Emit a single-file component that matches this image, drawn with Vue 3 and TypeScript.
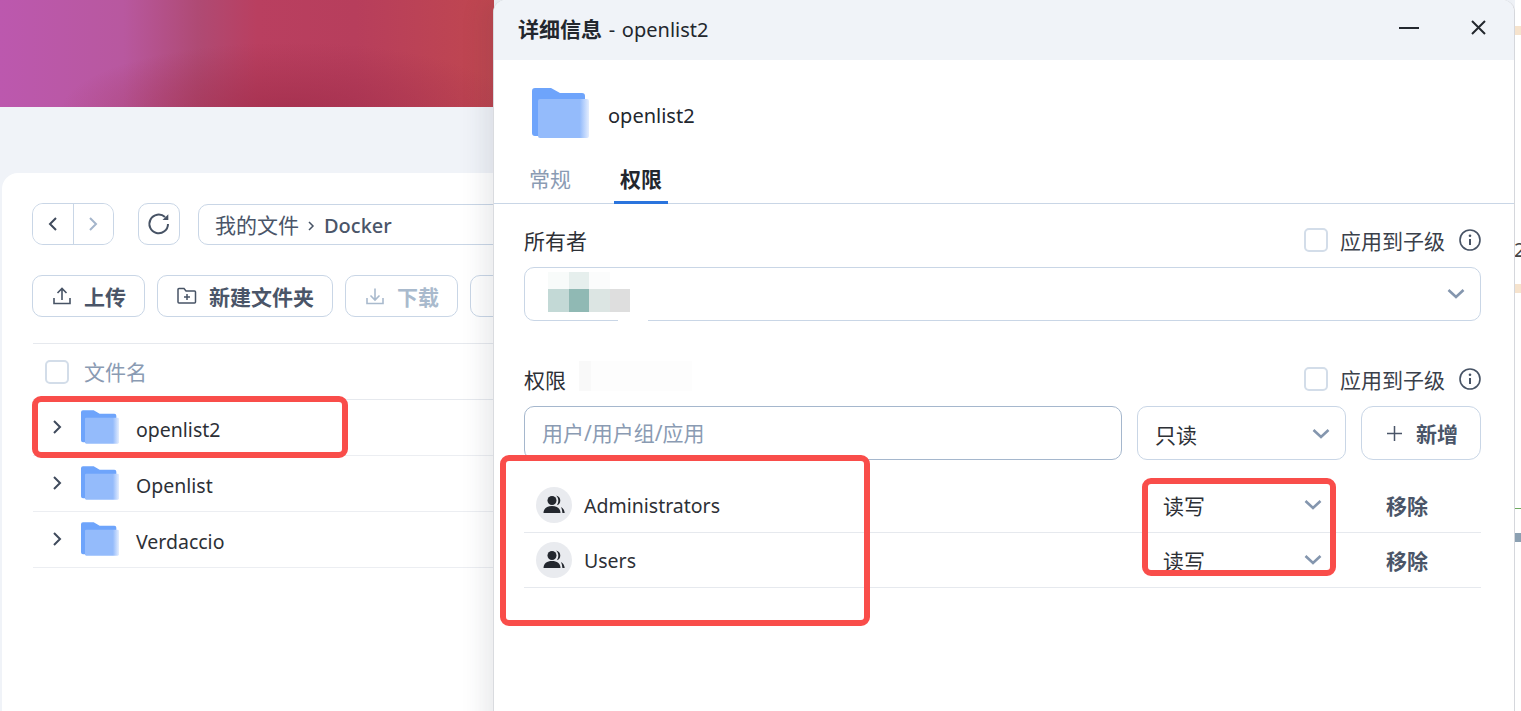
<script setup lang="ts">
const files = ['openlist2', 'Openlist', 'Verdaccio']

interface Grant {
  name: string
  access: string
}

const grants: Grant[] = [
  { name: 'Administrators', access: '读写' },
  { name: 'Users', access: '读写' },
]
</script>

<template>
  <div class="page">
    <!-- file manager behind the dialog -->
    <section class="manager">
      <div class="hero"></div>
      <div class="card">
        <div class="nav-row">
          <div class="nav-group">
            <button class="nav-btn">
              <svg width="12" height="16" viewBox="0 0 12 16" fill="none"><path d="M9 2 3 8l6 6" stroke="#3f4a5c" stroke-width="2"/></svg>
            </button>
            <button class="nav-btn">
              <svg width="12" height="16" viewBox="0 0 12 16" fill="none"><path d="m3 2 6 6-6 6" stroke="#a4b5cb" stroke-width="2"/></svg>
            </button>
          </div>
          <button class="refresh">
            <svg width="24" height="24" viewBox="0 0 24 24" fill="none">
              <path d="M21 12a9.300 9.300 0 1 1-3-6.900" stroke="#475365" stroke-width="2"/>
              <path d="M21.300 2.200v5.800h-5.800z" fill="#475365"/>
            </svg>
          </button>
          <div class="crumbs">
            <span class="cjk">我的文件</span>
            <svg width="9" height="12" viewBox="0 0 9 12" fill="none"><path d="m2 2 4 4-4 4" stroke="#475365" stroke-width="1.5"/></svg>
            <span class="crumb-current">Docker</span>
          </div>
        </div>

        <div class="tool-row">
          <button class="tool">
            <svg width="20" height="20" viewBox="0 0 20 20" fill="none">
              <path d="M2 12v5.500h16V12M10 14V2.500M5.500 7 10 2.500 14.500 7" stroke="#475365" stroke-width="1.600"/>
            </svg>
            上传
          </button>
          <button class="tool">
            <svg width="20" height="20" viewBox="0 0 20 20" fill="none">
              <path d="M1 3.500a1 1 0 0 1 1-1h5l2 2.500h8.500a1 1 0 0 1 1 1v10a1 1 0 0 1-1 1H2a1 1 0 0 1-1-1zM10 8v6M7 11h6" stroke="#475365" stroke-width="1.500"/>
            </svg>
            新建文件夹
          </button>
          <button class="tool off">
            <svg width="20" height="20" viewBox="0 0 20 20" fill="none">
              <path d="M2 12v5.500h16V12M10 2.500V14M5.500 9.500 10 14l4.500-4.500" stroke="#a9bacd" stroke-width="1.600"/>
            </svg>
            下载
          </button>
          <button class="tool off">
            <svg width="20" height="20" viewBox="0 0 20 20" fill="none">
              <path d="M3 5h14M6 5l1 12h6l1-12M8 5V3h4v2" stroke="#a9bacd" stroke-width="1.600"/>
            </svg>
          </button>
        </div>

        <div class="table">
          <div class="table-head">
            <span class="check"></span>
            <span class="cjk head-label">文件名</span>
          </div>
          <div v-for="file in files" :key="file" class="file-row">
            <svg class="expand" width="12" height="16" viewBox="0 0 12 16" fill="none"><path d="m3 2 6 6-6 6" stroke="#3f4a5c" stroke-width="2"/></svg>
            <svg class="file-icon" width="38" height="34" viewBox="0 0 57 50">
              <defs>
                <linearGradient :id="`fade-${file}`" x1="0" x2="1" y1="0" y2="0">
                  <stop offset="0.82" stop-color="#94bbfb"/>
                  <stop offset="1" stop-color="#e4edfe"/>
                </linearGradient>
              </defs>
              <path d="M0 3a3 3 0 0 1 3-3h16l9 5h22a3 3 0 0 1 3 3v40H3a3 3 0 0 1-3-3z" fill="#6ea4fb"/>
              <rect x="6" y="11" width="51" height="39" rx="2" :fill="`url(#fade-${file})`"/>
            </svg>
            <span class="file-name">{{ file }}</span>
          </div>
        </div>
      </div>
    </section>

    <!-- details dialog -->
    <section class="dialog">
      <header class="dialog-head">
        <span class="dialog-title"><b>详细信息</b> - openlist2</span>
        <div class="dialog-actions">
          <svg width="20" height="20" viewBox="0 0 20 20"><path d="M0 10h20" stroke="#23272e" stroke-width="2"/></svg>
          <svg width="15" height="15" viewBox="0 0 15 15"><path d="m1 1 13 13M14 1 1 14" stroke="#23272e" stroke-width="2"/></svg>
        </div>
      </header>

      <div class="dialog-file">
        <svg width="57" height="50" viewBox="0 0 57 50">
          <defs>
            <linearGradient id="fade-big" x1="0" x2="1" y1="0" y2="0">
              <stop offset="0.82" stop-color="#94bbfb"/>
              <stop offset="1" stop-color="#e4edfe"/>
            </linearGradient>
          </defs>
          <path d="M0 3a3 3 0 0 1 3-3h16l9 5h22a3 3 0 0 1 3 3v40H3a3 3 0 0 1-3-3z" fill="#6ea4fb"/>
          <rect x="6" y="11" width="51" height="39" rx="2" fill="url(#fade-big)"/>
        </svg>
        <span class="dialog-name">openlist2</span>
      </div>

      <nav class="tabs">
        <span class="tab">常规</span>
        <span class="tab active">权限</span>
      </nav>

      <div class="dialog-body">
        <div class="label-row">
          <span class="cjk">所有者</span>
          <div class="apply">
            <span class="check"></span>
            <span class="cjk">应用到子级</span>
            <svg width="22" height="22" viewBox="0 0 22 22" fill="none">
              <circle cx="11" cy="11" r="10" stroke="#475365" stroke-width="1.600"/>
              <path d="M11 10v6" stroke="#475365" stroke-width="2"/>
              <circle cx="11" cy="6.700" r="1.300" fill="#475365"/>
            </svg>
          </div>
        </div>
        <div class="owner">
          <div class="mosaic">
            <i style="background:#f8fbfa"></i><i style="background:#e6efed"></i><i style="background:#fbfcfc"></i><i></i>
            <i style="background:#c3d9d6"></i><i style="background:#90b9b4"></i><i style="background:#dce5e3"></i><i style="background:#dedede"></i>
          </div>
          <svg class="chevron" width="18" height="12" viewBox="0 0 18 12" fill="none"><path d="m1.500 2 7.500 7 7.500-7" stroke="#8496ae" stroke-width="2.600"/></svg>
        </div>

        <div class="label-row second">
          <span class="cjk">权限</span>
          <div class="smudge"></div>
          <div class="apply">
            <span class="check"></span>
            <span class="cjk">应用到子级</span>
            <svg width="22" height="22" viewBox="0 0 22 22" fill="none">
              <circle cx="11" cy="11" r="10" stroke="#475365" stroke-width="1.600"/>
              <path d="M11 10v6" stroke="#475365" stroke-width="2"/>
              <circle cx="11" cy="6.700" r="1.300" fill="#475365"/>
            </svg>
          </div>
        </div>
        <div class="add-row">
          <div class="who">用户/用户组/应用</div>
          <div class="level">
            <span class="cjk">只读</span>
            <svg class="chevron" width="18" height="12" viewBox="0 0 18 12" fill="none"><path d="m1.500 2 7.500 7 7.500-7" stroke="#8496ae" stroke-width="2.600"/></svg>
          </div>
          <button class="add">
            <svg width="15" height="15" viewBox="0 0 15 15"><path d="M7.500 0v15M0 7.500h15" stroke="#4a5568" stroke-width="1.500"/></svg>
            新增
          </button>
        </div>

        <div class="grants">
          <div v-for="grant in grants" :key="grant.name" class="grant">
            <span class="avatar">
              <svg width="22" height="22" viewBox="0 0 22 22">
                <circle cx="9" cy="6.500" r="4.500" fill="#23272e"/>
                <path d="M0.500 19c0-4.500 3.500-7 8.500-7s8.500 2.500 8.500 7z" fill="#23272e"/>
                <path d="M13 1.500c2.800.6 4.300 2.500 4.300 5s-1.500 4.300-3.500 4.800c1-1.300 1.500-3 1.500-4.800s-.8-3.600-2.300-5zM18 13c2 1 3.400 3 3.700 6h-2.300c-.2-2.300-.6-4.200-1.400-6z" fill="#23272e"/>
              </svg>
            </span>
            <span class="grant-name">{{ grant.name }}</span>
            <span class="grant-access">{{ grant.access }}</span>
            <svg class="grant-chevron" width="18" height="12" viewBox="0 0 18 12" fill="none"><path d="m1.500 2 7.500 7 7.500-7" stroke="#8496ae" stroke-width="2.600"/></svg>
            <span class="grant-remove">移除</span>
          </div>
        </div>
      </div>
    </section>

    <!-- sliver of the window behind, on the far right -->
    <div class="sliver">
      <i class="bar" style="top:26px"></i>
      <i class="digit">2</i>
      <i class="bar" style="top:284px"></i>
      <i class="green"></i>
      <i class="slate"></i>
    </div>

    <!-- red annotation boxes -->
    <div class="mark mark-file"></div>
    <div class="mark mark-names"></div>
    <div class="mark mark-access"></div>
  </div>
</template>

<style scoped>
.page {
  position: relative;
  width: 1521px;
  height: 711px;
  overflow: hidden;
  background: #f0f3f8;
  font-family: "Noto Sans", "Noto Sans CJK SC", sans-serif;
  font-size: 20px;
  color: #2d3036;
}

/* the CJK glyphs in the shot run a touch larger than the latin ones */
.cjk {
  font-size: 21px;
}

button {
  font-family: inherit;
  background: #fff;
  padding: 0;
}

.manager {
  width: 494px;
  height: 711px;
  overflow: hidden;
}

.hero {
  height: 107px;
  background:
    radial-gradient(ellipse 230px 70px at 290px 112px, rgba(160, 45, 75, 0.75), transparent),
    linear-gradient(90deg, #bc58ae 0%, #b8589f 25%, #af4a74 40%, #b93f60 52%, #b73e5c 72%, #c0474f 100%);
}

.card {
  margin: 66px 0 0 2px;
  height: 538px;
  background: #fff;
  border-radius: 16px 0 0 0;
  padding: 30px 0 0 30px;
}

.nav-row {
  display: flex;
  align-items: center;
  height: 42px;
  white-space: nowrap;
}

.nav-group {
  display: flex;
  width: 82px;
  height: 42px;
  border: 1px solid #c9d6e6;
  border-radius: 11px;
  box-sizing: border-box;
  overflow: hidden;
  flex: none;
}

.nav-btn {
  flex: 1;
  border: 0;
  display: flex;
  align-items: center;
  justify-content: center;
}

.nav-btn + .nav-btn {
  border-left: 1px solid #c9d6e6;
}

.refresh {
  width: 42px;
  height: 42px;
  flex: none;
  margin-left: 24px;
  border: 1px solid #c9d6e6;
  border-radius: 10px;
  display: flex;
  align-items: center;
  justify-content: center;
}

.crumbs {
  flex: none;
  width: 400px;
  height: 41px;
  box-sizing: border-box;
  margin-left: 18px;
  padding: 3px 0 0 16px;
  display: flex;
  align-items: center;
  gap: 8px;
  border: 1px solid #c9d6e6;
  border-radius: 10px;
  color: #4a5568;
  line-height: 1;
}

.crumb-current {
  font-weight: 500;
}

.tool-row {
  display: flex;
  gap: 12px;
  margin-top: 30px;
  white-space: nowrap;
}

.tool {
  flex: none;
  height: 42px;
  padding: 0 18px 0 19px;
  box-sizing: border-box;
  display: flex;
  align-items: center;
  gap: 12px;
  border: 1px solid #c9d6e6;
  border-radius: 10px;
  font-size: 21px;
  font-weight: 700;
  color: #4a5568;
}

.tool.off {
  color: #a9bacd;
}

.table {
  margin-top: 26px;
  margin-left: 1px;
}

.table-head {
  height: 55px;
  border-top: 1px solid #e6e9ee;
  border-bottom: 1px solid #e6e9ee;
  display: flex;
  align-items: center;
  gap: 15px;
  padding-left: 12px;
  color: #8a9bb3;
}

.head-label {
  margin-bottom: 2px;
}

.check {
  width: 24px;
  height: 24px;
  box-sizing: border-box;
  border: 2px solid #d3dde9;
  border-radius: 5px;
  flex: none;
  background: #fff;
}

.file-row {
  height: 55px;
  border-bottom: 1px solid #eceef2;
  display: flex;
  align-items: center;
  padding-left: 18px;
}

.expand {
  margin-right: 18px;
  margin-top: -1px;
}

.file-icon {
  margin-top: -1px;
}

.file-name {
  margin: 3px 0 0 17px;
  font-size: 19.500px;
}

.dialog {
  position: absolute;
  left: 494px;
  top: 0;
  width: 1020px;
  height: 760px;
  background: #fff;
  border-radius: 12px 12px 0 0;
  box-shadow: -1px 0 0 #d9dbdf, -10px 0 24px rgba(40, 50, 70, 0.1), 1px 0 0 #d9dbdf;
}

.dialog-head {
  height: 60px;
  box-sizing: border-box;
  background: #f0f3f8;
  border-radius: 12px 12px 0 0;
  display: flex;
  align-items: center;
  justify-content: space-between;
  padding: 0 28px 4px 24px;
}

.dialog-title {
  color: #23272e;
  word-spacing: 1.500px;
}

.dialog-title b {
  font-size: 21px;
  font-weight: 700;
}

.dialog-actions {
  display: flex;
  align-items: center;
  gap: 52px;
  margin-bottom: 1px;
}

.dialog-file {
  display: flex;
  align-items: center;
  gap: 19px;
  height: 50px;
  margin: 28px 0 0 38px;
  color: #23272e;
}

.dialog-name {
  margin-top: 4px;
}

.tabs {
  display: flex;
  height: 66px;
  box-sizing: border-box;
  border-bottom: 1px solid #c9d6e6;
  padding-left: 33px;
  gap: 41px;
  align-items: flex-end;
}

.tab {
  padding: 0 2px;
  height: 46px;
  line-height: 42px;
  font-size: 21px;
  color: #8a9bb3;
  margin-bottom: -1px;
}

.tab.active {
  width: 54px;
  padding: 0;
  box-sizing: border-box;
  text-align: center;
  color: #23272e;
  font-weight: 700;
  border-bottom: 3px solid #2a74dd;
}

.dialog-body {
  padding: 24px 33px 0 30px;
}

.label-row {
  display: flex;
  align-items: center;
  height: 24px;
  color: #2d3036;
}

.label-row.second {
  margin-top: 46px;
  position: relative;
}

.smudge {
  position: absolute;
  left: 55px;
  top: -6px;
  width: 113px;
  height: 30px;
  background: linear-gradient(90deg, #f9f9f9 12px, #fdfdfd 12px);
}

.apply {
  margin-left: auto;
  display: flex;
  align-items: center;
  color: #3a404a;
}

.apply span:nth-child(2) {
  margin: 0 14px 0 12px;
}

.owner {
  position: relative;
  height: 54px;
  box-sizing: border-box;
  margin-top: 15px;
  border: 1px solid #c9d6e6;
  border-radius: 10px;
}

/* the blur in the shot also wipes a bit of the bottom border */
.owner::after {
  content: "";
  position: absolute;
  left: 93px;
  bottom: -1px;
  width: 30px;
  height: 1px;
  background: #fff;
}

.chevron {
  flex: none;
}

.owner .chevron {
  position: absolute;
  right: 15px;
  top: 20px;
}

.mosaic {
  position: absolute;
  left: 23px;
  top: 4px;
  display: grid;
  grid-template-columns: repeat(4, 20.500px);
  grid-template-rows: 17px 23px;
}

.add-row {
  display: flex;
  gap: 15px;
  height: 54px;
  margin-top: 15px;
}

.who {
  width: 598px;
  box-sizing: border-box;
  padding-left: 17px;
  font-size: 21px;
  line-height: 52px;
  border: 1px solid #a5b7cd;
  border-radius: 10px;
  color: #8a9bb3;
}

.level {
  width: 209px;
  box-sizing: border-box;
  padding: 2px 15px 0 17px;
  border: 1px solid #c9d6e6;
  border-radius: 10px;
  display: flex;
  align-items: center;
  justify-content: space-between;
}

.add {
  width: 120px;
  box-sizing: border-box;
  padding-left: 3px;
  border: 1px solid #c9d6e6;
  border-radius: 12px;
  display: flex;
  align-items: center;
  justify-content: center;
  gap: 14px;
  font-size: 21px;
  font-weight: 700;
  color: #4a5568;
}

.grants {
  margin-top: 18px;
}

.grant {
  height: 55px;
  box-sizing: border-box;
  border-bottom: 1px solid #e6e9ee;
  display: flex;
  align-items: center;
  padding-left: 12px;
}

.avatar {
  width: 36px;
  height: 36px;
  border-radius: 50%;
  background: #e9ebef;
  display: flex;
  align-items: center;
  justify-content: center;
  flex: none;
}

.grant-name {
  margin-left: 12px;
  width: 579px;
  flex: none;
  font-size: 19.500px;
}

.grant-access {
  width: 141px;
  flex: none;
  font-size: 21px;
}

.grant-chevron {
  flex: none;
}

.grant-remove {
  margin-left: 64px;
  font-size: 21px;
  font-weight: 700;
  color: #4a5568;
}

.sliver {
  position: absolute;
  left: 1515px;
  top: 0;
  width: 6px;
  height: 711px;
  background: #fff;
  overflow: hidden;
}

.sliver i {
  position: absolute;
  left: 0;
  font-style: normal;
}

.bar {
  width: 6px;
  height: 9px;
  background: #f6e3cd;
}

.digit {
  top: 236px;
  left: -1px !important;
  color: #444;
}

.green {
  top: 508px;
  width: 6px;
  height: 1px;
  background: #6caa5f;
}

.slate {
  top: 533px;
  width: 6px;
  height: 9px;
  background: #8ba0b2;
}

.mark {
  position: absolute;
  box-sizing: border-box;
  border: 6px solid #f94d4a;
  border-radius: 9px;
}

.mark-file {
  left: 32px;
  top: 396px;
  width: 316px;
  height: 62px;
}

.mark-names {
  left: 500px;
  top: 455px;
  width: 370px;
  height: 171px;
}

.mark-access {
  left: 1142px;
  top: 478px;
  width: 194px;
  height: 98px;
}
</style>
